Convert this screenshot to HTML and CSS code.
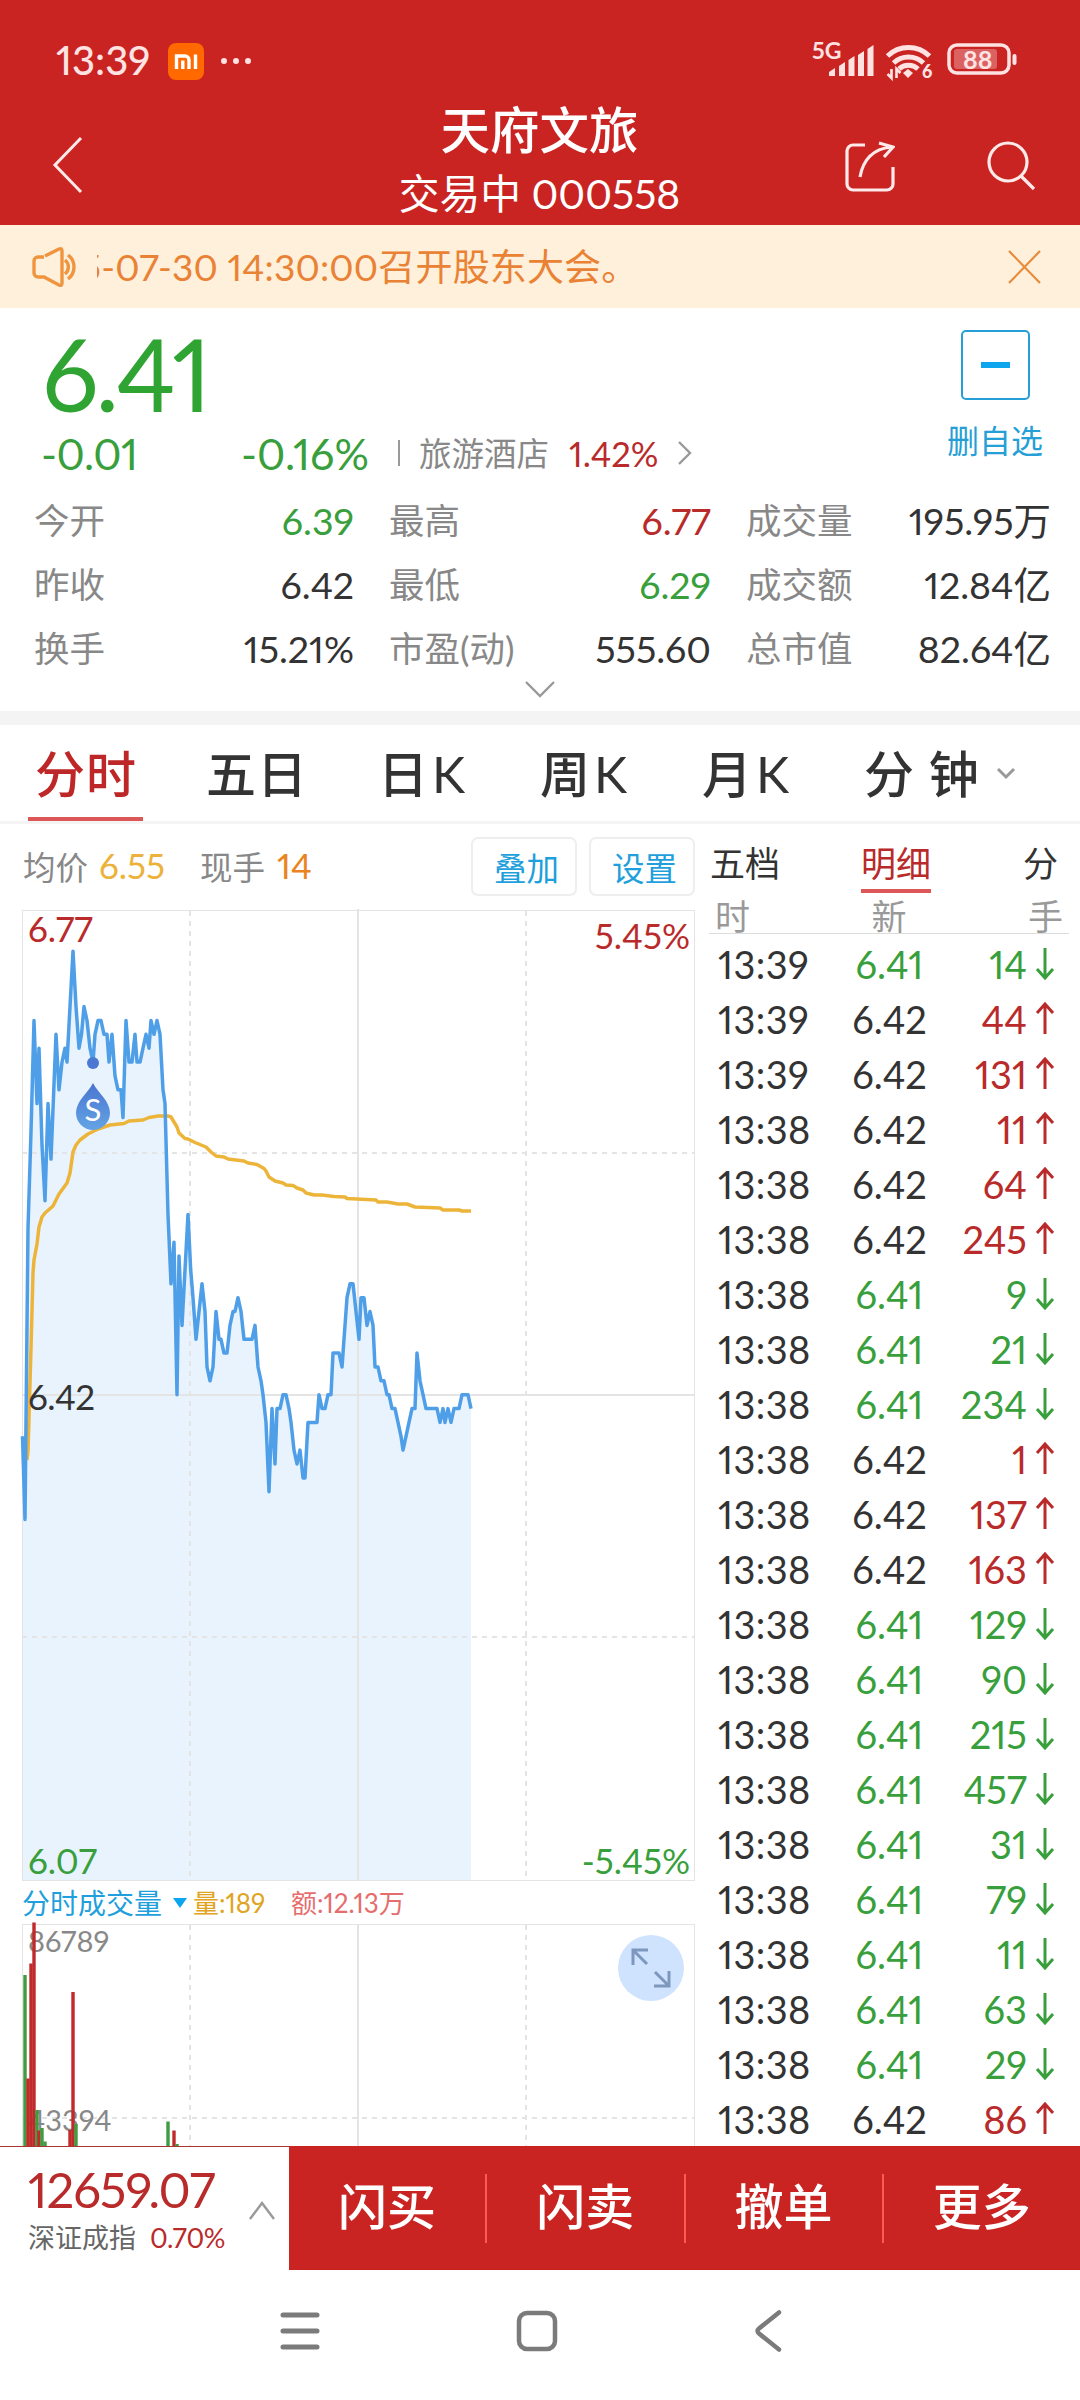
FILE: index.html
```html
<!DOCTYPE html>
<html lang="zh-CN">
<head>
  <meta charset="UTF-8">
  <title>天府文旅 000558</title>
  <link rel="stylesheet" href="styles.css">
</head>
<body>

  <div class="header">
    <div class="status">
      <span class="clock">13:39</span>
      <svg class="mi" width="36" height="37" viewBox="0 0 36 37">
        <rect width="36" height="37" rx="8" fill="#ff6900"/>
        <path d="M8.500 26V13H17a4 4 0 0 1 4 4v9M14.800 17.500V26M27.500 11.500V26" fill="none" stroke="#fff" stroke-width="3.400"/>
      </svg>
      <span class="dots"><i></i><i></i><i></i></span>
      <svg class="status-icons" width="206" height="42" viewBox="0 0 206 42">
        <text x="0" y="19" class="net">5G</text>
        <g fill="#ffe3e3">
          <path d="M17 36v-4l6-4v8zM27 36V26l6-4v14zM36.500 36V20l6-4v20zM46 36V15l6-4v25zM55.500 36V9l6-4v31z"/>
          <path d="M91 33l5-4 5 4-5 5z"/>
          <rect x="200.500" y="14" width="4" height="11" rx="2"/>
        </g>
        <g fill="none" stroke="#ffe3e3">
          <path d="M75.500 16a30 30 0 0 1 42 0M81.500 23a22 22 0 0 1 30 0M87 29a14 14 0 0 1 19 0" stroke-width="5"/>
          <path d="M79.500 29v9l-4-4M84.500 38v-9l4 4" stroke-width="2.600"/>
          <rect x="137" y="5" width="60" height="28" rx="8" stroke-width="3.500"/>
        </g>
        <rect x="142" y="9" width="43" height="20" rx="3" fill="#dc6262"/>
        <text x="110" y="38" class="wifi-gen">6</text>
        <text x="151" y="29" class="battery">88</text>
      </svg>
    </div>
    <div class="titlebar">
      <svg class="back" width="32" height="58" viewBox="0 0 32 58"><path d="M30 2 4 29l26 27" fill="none" stroke="#ffe9e9" stroke-width="3"/></svg>
      <div class="title">
        <h1>天府文旅</h1>
        <p>交易中 000558</p>
      </div>
      <svg class="share" width="50" height="52" viewBox="0 0 50 52">
        <path d="M20 5H8a6 6 0 0 0-6 6v33a6 6 0 0 0 6 6h34a6 6 0 0 0 6-6V27M15 37C18 20 28 9 46 7M34 3l14 4-9 10" fill="none" stroke="#ffe9e9" stroke-width="3.200"/>
      </svg>
      <svg class="search" width="50" height="52" viewBox="0 0 50 52">
        <circle cx="21" cy="22" r="19" fill="none" stroke="#ffe9e9" stroke-width="3.200"/><path d="M34 36l13 13" stroke="#ffe9e9" stroke-width="3.200"/>
      </svg>
    </div>
  </div>

  <div class="notice">
    <svg width="46" height="42" viewBox="0 0 46 42" fill="none" stroke="#f0953f" stroke-width="3.400">
      <path d="M12 11H6a4 4 0 0 0-4 4v12a4 4 0 0 0 4 4h6l15 8c2 1 3 0 3-2V5c0-2-1-3-3-2L13 10"/>
      <path d="M33 14a9 9 0 0 1 0 14M36 9a15 15 0 0 1 0 24"/>
    </svg>
    <div class="notice-text"><span>5-07-30 14:30:00召开股东大会。</span></div>
    <svg class="close" width="34" height="34" viewBox="0 0 34 34"><path d="M1 1l31 32M32 1 1 33" stroke="#e88b3c" stroke-width="2.200"/></svg>
  </div>

  <div class="quote">
    <div class="quote-top">
      <div>
        <div class="price">6.41</div>
        <div class="change">
          <span class="diff">-0.01</span>
          <span class="pct">-0.16%</span>
          <span class="bar"></span>
          <span class="sector">旅游酒店</span>
          <span class="sector-pct">1.42%</span>
          <svg width="14" height="24" viewBox="0 0 14 24"><path d="M1 1l11 11L1 23" fill="none" stroke="#999" stroke-width="2.400"/></svg>
        </div>
      </div>
      <div class="fav">
        <div class="fav-box"><span></span></div>
        <p>删自选</p>
      </div>
    </div>
    <div class="stats">
      <div><label>今开</label><b class="green">6.39</b></div>
      <div><label>最高</label><b class="red">6.77</b></div>
      <div><label>成交量</label><b>195.95万</b></div>
      <div><label>昨收</label><b>6.42</b></div>
      <div><label>最低</label><b class="green">6.29</b></div>
      <div><label>成交额</label><b>12.84亿</b></div>
      <div><label>换手</label><b>15.21%</b></div>
      <div><label>市盈(动)</label><b>555.60</b></div>
      <div><label>总市值</label><b>82.64亿</b></div>
    </div>
    <svg class="expand" width="30" height="17" viewBox="0 0 30 17"><path d="M1 1l14 14L29 1" fill="none" stroke="#999" stroke-width="2.400"/></svg>
  </div>

  <div class="tabs">
    <a class="active">分时</a>
    <a class="five">五日</a>
    <a>日<span>K</span></a>
    <a>周<span>K</span></a>
    <a>月<span>K</span></a>
    <a class="minute">分 钟</a>
    <svg width="20" height="13" viewBox="0 0 20 13"><path d="M2 2l8 8 8-8" fill="none" stroke="#999" stroke-width="3"/></svg>
  </div>

  <div class="main">
    <div class="left">
      <div class="info">
        <label>均价</label><span class="avg">6.55</span>
        <label>现手</label><span class="hand">14</span>
        <button>叠加</button>
        <button>设置</button>
      </div>
      <svg class="chart" width="702" height="974" viewBox="0 908 702 974">
        <g id="priceArea"></g>
        <g class="grid">
          <rect x="22.500" y="910.500" width="672" height="970"/>
          <path d="M358 909v972M22 1395h672" stroke-width="2"/>
          <path class="dash" d="M190 911v969M526 911v969M22 1153h672M22 1637h672"/>
        </g>
        <g id="priceLine"></g>
        <circle cx="93" cy="1063" r="6" fill="#4b78d2"/>
        <path d="M93 1083c5 10 17 18 17 30a17 17 0 0 1-34 0c0-12 12-20 17-30z" fill="url(#drop)"/>
        <text x="93" y="1121" class="mark" text-anchor="middle">S</text>
        <text x="28" y="942" class="axis red">6.77</text>
        <text x="690" y="949" class="axis red" text-anchor="end">5.45%</text>
        <text x="28" y="1410" class="axis">6.42</text>
        <text x="28" y="1874" class="axis green">6.07</text>
        <text x="690" y="1874" class="axis green" text-anchor="end">-5.45%</text>
        <defs>
          <linearGradient id="drop" x1="0" y1="0" x2="0" y2="1">
            <stop offset="0" stop-color="#4a74d0"/>
            <stop offset="1" stop-color="#63a4e4"/>
          </linearGradient>
        </defs>
      </svg>
      <div class="vol-head">
        <span class="vol-name">分时成交量</span>
        <i class="triangle"></i>
        <span class="vol-num">量:189</span>
        <span class="vol-sum">额:12.13万</span>
      </div>
      <svg class="volume" width="702" height="226" viewBox="0 1921 702 226">
        <g class="grid">
          <rect x="22.500" y="1924.500" width="672" height="260"/>
          <path d="M358 1924v230" stroke-width="2"/>
          <path class="dash" d="M190 1925v230M526 1925v230M22 2118h672"/>
        </g>
        <text x="28" y="1952" class="vol-axis">86789</text>
        <text x="28" y="2131" class="vol-axis">43394</text>
        <g id="volumeBars"></g>
        <circle cx="651" cy="1968" r="33" fill="#cfe2fe"/>
        <path d="M647 1964l-14-14M633 1965v-15h15M655 1972l14 14M669 1971v15h-15" fill="none" stroke="#7d97bd" stroke-width="3"/>
      </svg>
    </div>

    <div class="right">
      <div class="side-tabs">
        <a>五档</a><a class="active">明细</a><a>分</a>
      </div>
      <div class="side-head"><span>时</span><span>新</span><span>手</span></div>
      <div id="trades"></div>
    </div>
  </div>

  <div class="bottom">
    <div class="index">
      <div>
        <div class="index-num">12659.07</div>
        <div class="index-name">深证成指 <span>0.70%</span></div>
      </div>
      <svg width="26" height="20" viewBox="0 0 26 20"><path d="M1 18 13 2l12 16" fill="none" stroke="#999" stroke-width="2.400"/></svg>
    </div>
    <div class="actions">
      <a>闪买</a><a>闪卖</a><a>撤单</a><a>更多</a>
    </div>
  </div>

  <div class="sysnav">
    <svg width="40" height="42" viewBox="0 0 40 42"><path d="M3 5h34M3 21h34M3 37h34" stroke="#7b7b7b" stroke-width="5" stroke-linecap="round"/></svg>
    <svg width="42" height="42" viewBox="0 0 42 42"><rect x="3" y="3" width="36" height="36" rx="8" fill="none" stroke="#7b7b7b" stroke-width="4.500"/></svg>
    <svg width="28" height="42" viewBox="0 0 28 42"><path d="M25 2.500 5 18.500q-3 2.500 0 5L25 39.500" fill="none" stroke="#7b7b7b" stroke-width="4.500" stroke-linecap="round"/></svg>
  </div>

  <script src="script.js"></script>
</body>
</html>
```

FILE: styles.css
```css
* {
  box-sizing: border-box;
}

body {
  margin: 0;
  width: 1080px;
  height: 2400px;
  overflow: hidden;
  background-color: #fff;
  color: #333;
  font-family: Lato, "Noto Sans CJK SC", sans-serif;
  font-variant-numeric: proportional-nums;
}

h1, p {
  margin: 0;
}

svg {
  display: block;
  flex: none;
}

.red {
  color: #b92b2b;
  fill: #b92b2b;
}

.green {
  color: #389f3c;
  fill: #389f3c;
}

/* header */
.header {
  height: 225px;
  background-color: #c92322;
  color: #fff;
}

.status {
  display: flex;
  align-items: center;
  height: 100px;
  padding: 22px 62px 0 56px;
}

.clock {
  width: 112px;
  font-size: 40px;
  font-weight: 500;
  line-height: 48px;
  padding-bottom: 2px;
  color: #ffe3e3;
}

.dots {
  display: flex;
  gap: 6px;
  margin-left: 17px;
}

.dots i {
  width: 6px;
  height: 6px;
  border-radius: 3px;
  background-color: #ffe3e3;
}

.status-icons {
  margin-left: auto;
  overflow: visible;
  fill: #ffe3e3;
}

.net {
  font-size: 23px;
  font-weight: 700;
}

.wifi-gen {
  font-size: 18px;
  font-weight: 900;
}

.battery {
  font-size: 25px;
  font-weight: 700;
}

.titlebar {
  display: flex;
  height: 125px;
  padding: 0 43px 0 51px;
}

.back {
  margin-top: 36px;
}

.title {
  width: 380px;
  margin-left: 267px;
  text-align: center;
}

.title h1 {
  font-size: 49.500px;
  font-weight: 500;
  line-height: 60px;
}

.title p {
  font-size: 40.800px;
  line-height: 68px;
}

.share {
  margin: 40px 0 0 116px;
}

.search {
  margin: 40px 0 0 92px;
}

/* notice */
.notice {
  display: flex;
  align-items: center;
  height: 83px;
  padding: 0 38px 0 32px;
  background-color: #fef0da;
}

.notice-text {
  flex: 1;
  margin-left: 19px;
  padding-bottom: 4px;
  overflow: hidden;
  white-space: nowrap;
  font-size: 37px;
  letter-spacing: 0.150px;
  color: #ea8235;
}

.notice-text span {
  margin-left: -16px;
}

/* quote */
.quote {
  height: 403px;
}

.quote-top {
  display: flex;
  justify-content: space-between;
  height: 181px;
  padding-right: 35px;
}

.price {
  height: 115px;
  padding: 15px 0 0 42px;
  font-size: 100px;
  line-height: 100px;
  letter-spacing: -3px;
  color: #30a433;
}

.change {
  display: flex;
  align-items: center;
  height: 60px;
  padding: 0 0 0 41px;
  font-size: 43px;
  color: #389f3c;
}

.diff {
  width: 200px;
  letter-spacing: -0.500px;
}

.pct {
  width: 157px;
}

.bar {
  width: 2px;
  height: 26px;
  margin-right: 19px;
  background-color: #999;
}

.sector {
  padding-bottom: 3px;
  font-size: 32.500px;
  color: #888;
}

.sector-pct {
  width: 109px;
  margin-left: 20px;
  font-size: 34.500px;
  color: #b92b2b;
}

.fav {
  width: 100px;
  padding-top: 22px;
  text-align: center;
  font-size: 32px;
  line-height: 46px;
  color: #269fd6;
}

.fav-box {
  display: flex;
  align-items: center;
  justify-content: center;
  width: 69px;
  height: 70px;
  margin: 0 auto 18px;
  border: 2.500px solid #269fd6;
  border-radius: 5px;
}

.fav-box span {
  width: 29px;
  height: 6px;
  background-color: #0ca5ee;
}

.stats {
  display: grid;
  grid-template-columns: 320px 322px 305px;
  column-gap: 35px;
  padding-left: 34px;
}

.stats div {
  display: flex;
  justify-content: space-between;
  height: 64px;
  line-height: 64px;
}

.stats label {
  font-size: 35.500px;
  color: #888;
}

.stats b {
  font-size: 37.500px;
  font-weight: 400;
}

.expand {
  margin: 0 auto;
}

/* tabs */
.tabs {
  display: flex;
  align-items: center;
  height: 113px;
  padding-left: 28px;
  border-top: 14px solid #f4f4f4;
  border-bottom: 3px solid #f4f4f4;
  font-size: 50px;
  font-weight: 500;
}

.tabs a {
  width: 162px;
  padding-left: 9px;
  height: 96px;
  line-height: 98px;
  white-space: nowrap;
}

.tabs a.active {
  width: 115px;
  padding-left: 7px;
  margin-right: 54px;
  border-bottom: 4px solid #dc5858;
  letter-spacing: 1px;
  color: #be2727;
}

.tabs a.five {
  width: 172px;
  letter-spacing: 1px;
}

.tabs span {
  margin-left: 4px;
  font-weight: 400;
}

.tabs a.minute {
  width: 141px;
  letter-spacing: 1px;
}

/* chart + trades */
.main {
  display: flex;
  height: 1322px;
  overflow: hidden;
}

.left {
  width: 702px;
}

.info {
  display: flex;
  align-items: center;
  height: 84px;
  padding: 0 7px 2px 23px;
  font-size: 35px;
}

.info label {
  font-size: 32.500px;
  color: #888;
}

.avg {
  width: 112px;
  padding-left: 11px;
  color: #ecb23c;
}

.hand {
  padding-left: 12px;
  color: #ea8420;
}

.info button {
  width: 106px;
  height: 59px;
  padding: 0 0 0 5px;
  margin: 2px 0 0 12px;
  border: 2px solid #eee;
  border-radius: 7px;
  background-color: #fff;
  font-family: inherit;
  font-size: 32.500px;
  color: #1f9fdb;
}

.hand + button {
  margin-left: auto;
}

.grid {
  fill: none;
  stroke: #e4e4e4;
}

.grid .dash {
  stroke-width: 2;
  stroke-dasharray: 5 5;
}

.axis {
  font-size: 35px;
}

.axis:not(.red):not(.green) {
  fill: #333;
  letter-spacing: -0.500px;
}

.mark {
  font-size: 31px;
  fill: #fff;
}

.vol-head {
  display: flex;
  align-items: center;
  height: 39px;
  padding: 3px 0 0 22px;
  font-size: 26px;
  line-height: 36px;
}

.vol-name {
  width: 151px;
  font-size: 28px;
  color: #1f9fdb;
}

.triangle {
  border: 7px solid transparent;
  border-top: 10px solid #0ca5ee;
  border-bottom: 0;
}

.vol-num {
  width: 104px;
  padding-left: 6px;
  color: #e0a422;
}

.vol-sum {
  color: #e56d6d;
}

.vol-axis {
  font-size: 29px;
  fill: #888;
}

.right {
  width: 360px;
  margin-left: 7px;
}

.side-tabs {
  display: flex;
  justify-content: space-between;
  height: 74px;
  padding: 0 11px 0 1px;
  font-size: 35px;
}

.side-tabs a {
  height: 69px;
  line-height: 78px;
}

.side-tabs .active {
  margin-left: -11px;
  border-bottom: 4px solid #dc5858;
  color: #b92b2b;
}

.side-head {
  display: flex;
  justify-content: space-between;
  height: 36px;
  padding: 0 6px;
  border-bottom: 1px solid #ddd;
  font-size: 35px;
  line-height: 36px;
  color: #999;
}

#trades {
  padding-top: 2px;
}

.trade {
  display: flex;
  align-items: center;
  height: 55px;
  padding-left: 9px;
  font-size: 38px;
}

.trade .time {
  width: 126px;
  letter-spacing: 0.400px;
}

.trade .deal {
  width: 91px;
  text-align: center;
}

.trade .lots {
  width: 92px;
  text-align: right;
}

.trade svg {
  margin-left: 8px;
}

/* bottom */
.bottom {
  display: flex;
  height: 124px;
}

.index {
  display: flex;
  align-items: center;
  justify-content: space-between;
  width: 289px;
  padding: 4px 14px 0 28px;
  border-top: 1px solid #a33;
}

.index-num {
  font-size: 49px;
  line-height: 54px;
  letter-spacing: -1px;
  color: #b92b2b;
}

.index-name {
  font-size: 27px;
  line-height: 44px;
  color: #666;
}

.index-name span {
  margin-left: 7px;
  letter-spacing: -0.500px;
  color: #b92b2b;
}

.actions {
  display: flex;
  align-items: center;
  flex: 1;
  background-color: #c92322;
}

.actions a {
  flex: 1;
  height: 69px;
  border-left: 2px solid #ff5a50;
  text-align: center;
  font-size: 49px;
  font-weight: 500;
  line-height: 65px;
  color: #fff;
}

.actions a:first-child {
  border-left: 0;
}

.sysnav {
  display: flex;
  align-items: center;
  height: 122px;
  padding-left: 280px;
  gap: 196px;
}
```

FILE: script.js
```js
// [x, ticks above the previous close of 6.42]
const prices = [
  [22.5,-3],[25,-9],[28,12],[31,19],[34,27],[37,21],[39,25],[42,18],[45,14],[48,21],[51,17],[56,26],[59,22],
  [62,24],[65,25],[67,24],[70,28],[73,32],[76,28],[79,25],[81.5,26],[84,28],[87,27],[90,25],[93,24],[95,26],
  [98,27],[101,27],[104,26],[107,26],[109,24],[112,26],[115,23],[118,22],[121,22],[123,20],[126,27],[129,24],
  [132,24],[135,26],[137,24],[140,24],[143,25],[146,26],[149,25],[151,27],[154,26],[157,27],[160,26],[163,22],
  [165,21],[168,13],[171,8],[174,11],[177,0],[179,10],[182,5],[185,9],[188,13],[190.7,9],[193,7],[196,4],
  [199,6],[202,8],[205,6],[207,2],[210,1],[213,2],[216,6],[219,4],[221,4],[224,3],[227,3],[230,5],[233,6],
  [235,6],[238,7],[241,6],[244,4],[252,4],[255,5],[258,2],[261,1],[263,0],[266,-2],[269,-7],[272,-1],[275,-5],
  [277,-1],[280,-1],[283,0],[286,0],[289,-1],[291,-2],[294,-4],[297,-5],[300,-4],[303,-6],[305,-6],[308,-2],
  [317,-2],[319,0],[322,-1],[325,-1],[328,0],[331,0],[333,3],[339,3],[342,2],[345,5],[347,7],[350,8],[353,8],
  [356,6],[359,4],[361,7],[364,7],[367,5],[370,6],[373,5],[375,2],[378,2],[381,1],[384,1],[387,0],[389,0],
  [392,-1],[395,-1],[398,-2],[401,-3],[403,-4],[406,-3],[409,-2],[412,-1],[415,-1],[417,3],[420,1],[423,0],
  [426,-1],[437,-1],[440,-2],[443,-1],[445,-2],[448,-1],[451,-2],[454,-1],[459,-1],[462,0],[468,0],[471,-1]
];

const average = '27,1460 28,1451 31,1348 33,1273 34,1260 37,1244 39,1227 42,1217 45,1213 53,1206 59,1194 67,1183 ' +
  '70,1173 73,1152 76,1145 80,1140 88,1134 98,1129 110,1125 124,1123.5 129,1121 143,1120 149,1117.5 158,1116 ' +
  '168,1116 171,1117 177,1127 179,1133 185,1138.5 188,1139 195,1142.5 206,1147 211,1152 216,1156 224,1157 ' +
  '228,1159 244,1161 248,1163 257,1164.5 264,1168.5 266,1171 269,1177 275,1181 283,1183 286,1185 293,1185.5 ' +
  '297,1188 303,1190 306,1193 314,1195 322,1195 334,1196.5 345,1197 347,1198.5 376,1200 378,1202 387,1202 ' +
  '398,1204 407,1204 415,1207 440,1208 443,1210 459,1210 462,1211 471,1211';

const line = prices.map(p => p[0] + ',' + (1394.7 - p[1] * 13.86).toFixed(1)).join(' ');

document.getElementById('priceArea').innerHTML =
  `<polygon points="22.5,1880 ${line} 471,1880" fill="#e8f3fe"/>`;
document.getElementById('priceLine').innerHTML =
  `<polyline points="${average}" fill="none" stroke="#edb43a" stroke-width="3.5" stroke-linejoin="round"/>
   <polyline points="${line}" fill="none" stroke="#4f9fe8" stroke-width="3.5" stroke-linejoin="round"/>`;

// [x, top, up]
const bars = [
  [25,1975,0],[28,2078.5,1],[31,1963.5,1],[34,1922.5,1],[37,2110,0],[39,2130.5,1],[42,2128,0],[45,2141.5,0],
  [70,2130,1],[73,1992,1],[76,2124,0],[168,2121.5,0],[174,2130.5,1],[177,2144,0]
];
document.getElementById('volumeBars').innerHTML = bars.map(b =>
  `<rect x="${b[0] - 1.7}" y="${b[1]}" width="3.4" height="${2147 - b[1]}" fill="${b[2] ? '#c12a2a' : '#3f9c40'}"/>`).join('');

const trades = [
  ['13:39', 14, 0], ['13:39', 44, 1], ['13:39', 131, 1], ['13:38', 11, 1], ['13:38', 64, 1], ['13:38', 245, 1],
  ['13:38', 9, 0], ['13:38', 21, 0], ['13:38', 234, 0], ['13:38', 1, 1], ['13:38', 137, 1], ['13:38', 163, 1],
  ['13:38', 129, 0], ['13:38', 90, 0], ['13:38', 215, 0], ['13:38', 457, 0], ['13:38', 31, 0], ['13:38', 79, 0],
  ['13:38', 11, 0], ['13:38', 63, 0], ['13:38', 29, 0], ['13:38', 86, 1]
];
const up = 'M10 32V2M2 11l8-9 8 9';
const down = 'M10 1v30M2 22l8 9 8-9';
document.getElementById('trades').innerHTML = trades.map(t => `
  <div class="trade">
    <span class="time">${t[0]}</span>
    <span class="deal ${t[2] ? '' : 'green'}">${t[2] ? '6.42' : '6.41'}</span>
    <span class="lots ${t[2] ? 'red' : 'green'}">${t[1]}</span>
    <svg width="20" height="33" viewBox="0 0 20 33"><path d="${t[2] ? up : down}" fill="none" stroke="${t[2] ? '#b92b2b' : '#389f3c'}" stroke-width="3"/></svg>
  </div>`).join('');
```
